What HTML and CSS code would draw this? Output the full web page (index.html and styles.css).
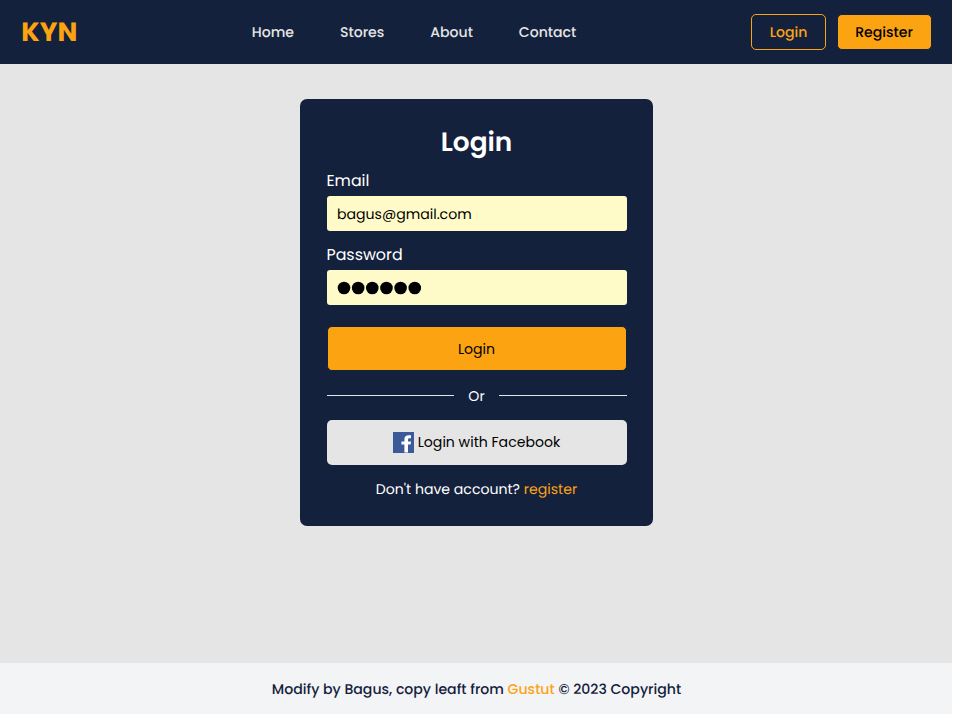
FILE: index.html
```html
<!DOCTYPE html>
<html lang="en">
<head>
<meta charset="utf-8">
<title>KYN - Login</title>
<link rel="stylesheet" href="styles.css">
</head>
<body>
<header class="header">
  <a class="logo"><span>KYN</span></a>
  <nav class="nav">
    <a>Home</a><a>Stores</a><a>About</a><a>Contact</a>
  </nav>
  <div class="actions">
    <a class="btn btn-outline"><span>Login</span></a>
    <a class="btn btn-solid"><span>Register</span></a>
  </div>
</header>
<main class="main">
  <form class="card">
    <h1 class="title"><span>Login</span></h1>
    <label class="label email-label"><span>Email</span></label>
    <div class="field"><span>bagus@gmail.com</span></div>
    <label class="label password-label"><span>Password</span></label>
    <div class="field">
      <svg width="86" height="14" viewBox="0 0 86 14"><circle cx="7" cy="7" r="6.300"/><circle cx="21.150" cy="7" r="6.300"/><circle cx="35.300" cy="7" r="6.300"/><circle cx="49.450" cy="7" r="6.300"/><circle cx="63.600" cy="7" r="6.300"/><circle cx="77.750" cy="7" r="6.300"/></svg>
    </div>
    <button type="button" class="submit"><span>Login</span></button>
    <div class="divider"><span>Or</span></div>
    <button type="button" class="facebook">
      <svg width="21" height="21" viewBox="0 0 21 21"><rect width="21" height="21" fill="#3c5a99"/><path fill="#fff" d="M11.400 20.500v-8H8.400V9.500h3V7.300C11.400 4.600 13.200 3.200 15.700 3.200l2.300.1v2.900h-1.500C15.400 6.200 15 6.900 15 7.900v1.600h3l-.4 3H15v8z"/></svg>
      <span>Login with Facebook</span>
    </button>
    <p class="signup"><span>Don't have account? <a>register</a></span></p>
  </form>
</main>
<footer class="footer"><span>Modify by Bagus, copy leaft from <a>Gustut</a> © 2023 Copyright</span></footer>
</body>
</html>
```
FILE: styles.css
```css
* { box-sizing: border-box; }
html { background: #fff; }
body {
  margin: 0;
  width: 952px;
  height: 714px;
  display: flex;
  flex-direction: column;
  background: #e5e5e5;
  font: 14.090px/21px Poppins, Inter, sans-serif;
  text-rendering: geometricPrecision;
}
.header {
  height: 64px;
  flex: none;
  display: flex;
  align-items: center;
  background: #14213d;
  color: #e5e5e5;
  font-weight: 500;
}
.logo {
  width: 251.800px;
  padding: 2px 0 0 21.300px;
  color: #fca311;
  font-size: 26.400px;
  line-height: 42px;
  font-weight: 700;
}
.nav { display: flex; gap: 45.900px; }
.actions {
  display: flex;
  align-items: center;
  gap: 11px;
  margin-left: auto;
  margin-right: 20px;
}
.btn {
  height: 36px;
  display: flex;
  align-items: center;
  justify-content: center;
  border: 1px solid #fca311;
  border-radius: 5px;
}
.btn-outline { width: 75px; color: #fca311; }
.btn-solid {
  width: 95px;
  padding-right: 1px;
  border-color: #14213d;
  background: #fca311;
  color: #000;
}
.main { flex: 1; padding-top: 35px; }
.card {
  width: 353px;
  height: 427px;
  margin: 0 auto 0 300px;
  padding: 21px 26px 0 27px;
  border-radius: 7px;
  background: #14213d;
  color: #fff;
}
.title {
  margin: 0;
  padding-top: 2px;
  height: 42px;
  font-size: 26.400px;
  line-height: 42px;
  font-weight: 600;
  text-align: center;
}
.title span,
.submit span { margin-left: -1px; }
.label {
  display: block;
  height: 24px;
  margin: 12px 0 3px -0.500px;
  font-size: 15.840px;
  line-height: 24px;
}
.email-label { margin-top: 7px; }
.field {
  height: 35px;
  display: flex;
  align-items: center;
  padding: 1px 10px 0;
  border-radius: 3px;
  background: #fffbc8;
  color: #000;
}
.submit,
.facebook {
  width: 100%;
  height: 45px;
  display: flex;
  align-items: center;
  justify-content: center;
  padding: 0;
  border: 1px solid #14213d;
  border-radius: 5px;
  background: #fca311;
  color: #000;
  font: inherit;
}
.submit { margin-top: 21px; padding-top: 1px; }
.divider {
  height: 21px;
  display: flex;
  align-items: center;
  justify-content: space-between;
  margin: 14px 0;
}
.divider span { padding-top: 2px; }
.divider::before,
.divider::after {
  content: "";
  width: 127px;
  height: 1px;
  background: #e5e5e5;
}
.divider::after { width: 128px; }
.facebook { gap: 3.500px; padding-right: 0.500px; border: 0; background: #e5e5e5; }
.signup { margin: 14px 0 0; text-align: center; }
.signup span { margin-left: -1px; }
.signup a,
.footer a { color: #fca311; }
.footer {
  height: 51px;
  flex: none;
  display: flex;
  align-items: center;
  justify-content: center;
  padding: 1px 0 0 1px;
  background: #f3f4f6;
  color: #14213d;
  font-weight: 500;
}
```
